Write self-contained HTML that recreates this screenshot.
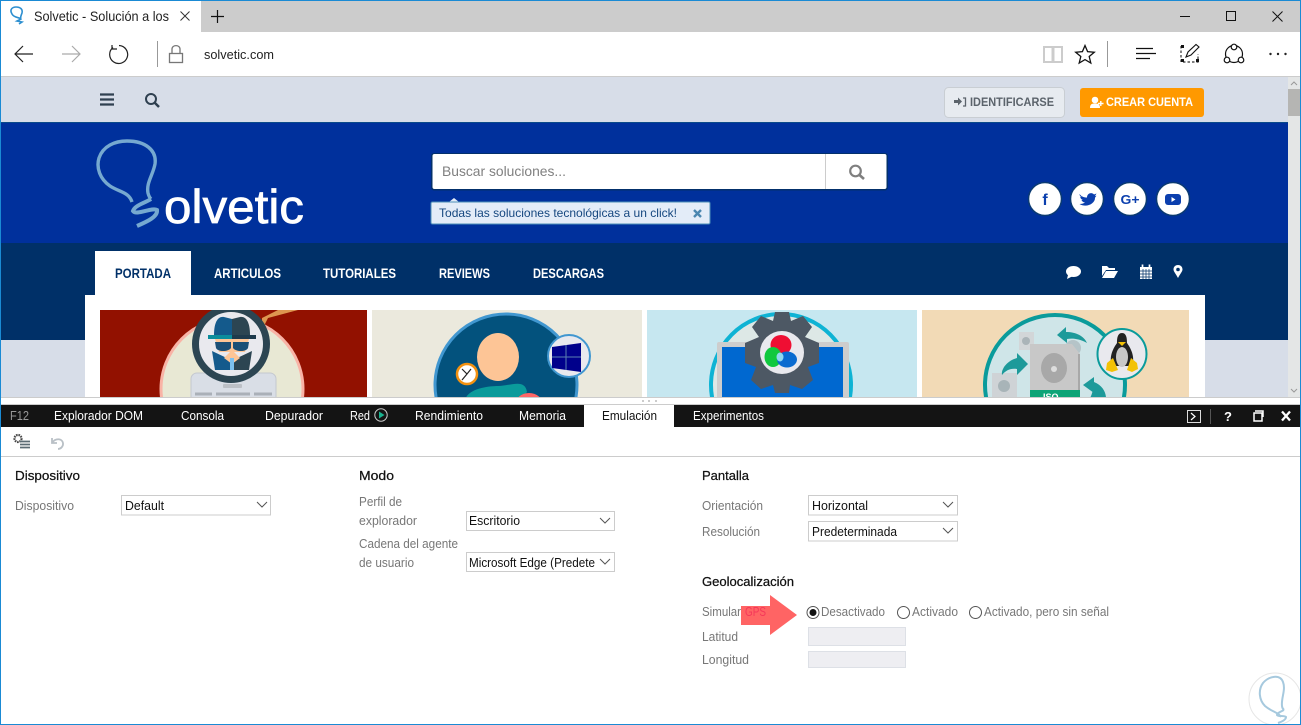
<!DOCTYPE html>
<html lang="es"><head><meta charset="utf-8"><title>Solvetic</title>
<style>html,body{margin:0;padding:0;background:#fff;overflow:hidden}svg{display:block}text{font-family:"Liberation Sans",sans-serif}.d{font-size:12.5px;fill:#fff}.l{font-size:12.5px;fill:#777}.h{font-size:13px;fill:#111;stroke:#111;stroke-width:.25}.v{font-size:12.5px;fill:#111}.n{font-size:14px;font-weight:bold;fill:#fff}</style></head><body>
<svg width="1301" height="725" viewBox="0 0 1301 725" xmlns="http://www.w3.org/2000/svg">
<defs><clipPath id="cl"><rect x="85" y="310" width="1120" height="87"/></clipPath><clipPath id="me"><rect x="468" y="553" width="127" height="18"/></clipPath></defs>
<rect width="1301" height="725" fill="#fff"/>
<!-- tab strip -->
<rect x="0" y="0" width="1301" height="32" fill="#ccc"/>
<rect x="1" y="1" width="200" height="31" fill="#fff"/>
<path d="M21 19C19 17 14 18 12 14C9 9 13 7 16 7C20 7 23 9 22 13C21 16 20 17 21 20M21 19L17 21L22 22L19 24" fill="none" stroke="#2d8fd0" stroke-width="1.600"/>
<text x="34" y="21" font-size="14" fill="#222" textLength="135" lengthAdjust="spacingAndGlyphs">Solvetic - Solución a los</text>
<path d="M180.500 11.500L189.500 20.500M189.500 11.500L180.500 20.500" stroke="#333" stroke-width="1" fill="none"/>
<path d="M217.500 10V23M211 16.500H224" stroke="#111" stroke-width="1.200" fill="none"/>
<path d="M1180 16.500H1190" stroke="#111" stroke-width="1"/>
<rect x="1226.500" y="11.500" width="9" height="9" fill="none" stroke="#111" stroke-width="1"/>
<path d="M1272.500 11.500L1282.500 21.500M1282.500 11.500L1272.500 21.500" stroke="#111" stroke-width="1" fill="none"/>
<!-- address bar -->
<rect x="1" y="32" width="1299" height="44" fill="#fff"/>
<rect x="1" y="76" width="1299" height="1" fill="#ccc"/>
<path d="M33 54H15M23 46L15 54L23 62" fill="none" stroke="#222" stroke-width="1.200"/>
<path d="M62 54H80M72 46L80 54L72 62" fill="none" stroke="#aaa" stroke-width="1.200"/>
<path d="M113 47.500A9 9 0 1 0 119 45.500M112 45V49H117" fill="none" stroke="#222" stroke-width="1.200"/>
<rect x="157" y="41" width="1" height="26" fill="#999"/>
<rect x="169.500" y="53.500" width="13" height="9" fill="none" stroke="#777" stroke-width="1.300"/>
<path d="M172 53V49C172 44.500 180 44.500 180 49V53" fill="none" stroke="#777" stroke-width="1.300"/>
<text x="204" y="59" font-size="13" fill="#222" textLength="70" lengthAdjust="spacingAndGlyphs">solvetic.com</text>
<path d="M1044 47H1052.500V62H1044ZM1053.500 47H1062V62H1053.500Z" fill="none" stroke="#ccc" stroke-width="2"/>
<path d="M1085 45.500L1087.600 51.600L1094.300 52.200L1089.200 56.500L1090.800 63L1085 59.600L1079.200 63L1080.800 56.500L1075.700 52.200L1082.400 51.600Z" fill="none" stroke="#111" stroke-width="1.300"/>
<rect x="1107" y="41" width="1" height="26" fill="#999"/>
<path d="M1136 48.500H1153M1136 53.500H1156M1136 58.500H1150" stroke="#111" stroke-width="1.200"/>
<path d="M1181 46V62H1198V54" fill="none" stroke="#333" stroke-width="1.200" stroke-dasharray="2.500 2"/>
<path d="M1186 57L1188 52L1196 44.500L1199 47L1191 55Z" fill="none" stroke="#111" stroke-width="1.100"/>
<path d="M1181 45h3v3h-3zM1196 59h3v3h-3zM1181 59h3v3h-3z" fill="#111"/>
<circle cx="1234" cy="54" r="8.500" fill="none" stroke="#111" stroke-width="1.200"/>
<circle cx="1234" cy="47" r="2.800" fill="#fff" stroke="#111" stroke-width="1.200"/>
<circle cx="1227" cy="60" r="2.800" fill="#fff" stroke="#111" stroke-width="1.200"/>
<circle cx="1241" cy="60" r="2.800" fill="#fff" stroke="#111" stroke-width="1.200"/>
<circle cx="1270.500" cy="54" r="1.200" fill="#222"/><circle cx="1278" cy="54" r="1.200" fill="#222"/><circle cx="1285.500" cy="54" r="1.200" fill="#222"/>
<!-- site top bar -->
<rect x="1" y="77" width="1287" height="45" fill="#d7dde8"/>
<path d="M100 94.500H114M100 99.500H114M100 104.500H114" stroke="#2f4050" stroke-width="2.300"/>
<circle cx="151" cy="99" r="5" fill="none" stroke="#2f4050" stroke-width="2"/><path d="M154.500 102.500L159 107" stroke="#2f4050" stroke-width="2.500"/>
<rect x="944.500" y="87.500" width="120" height="30" rx="4" fill="#e7ebf0" stroke="#c9ced3"/>
<path d="M954 100.500H958V98L962 102L958 106V103.500H954Z" fill="#5b636b" transform="translate(0,-.5)"/><path d="M963 98H965.500V106H963" fill="none" stroke="#5b636b" stroke-width="1.300"/>
<text x="970" y="106" font-size="11.500" font-weight="bold" fill="#5b636b" textLength="84" lengthAdjust="spacingAndGlyphs">IDENTIFICARSE</text>
<rect x="1080" y="88" width="124" height="29" rx="3" fill="#ff9900"/>
<circle cx="1095" cy="100" r="3.300" fill="#fff"/><path d="M1090 108C1090 104 1092 103.500 1095 103.500C1098 103.500 1100 104 1100 108Z" fill="#fff"/><path d="M1098 103.500H1103.500M1100.800 101V106" stroke="#fff" stroke-width="1.400"/>
<text x="1106" y="106" font-size="11.500" font-weight="bold" fill="#fff" textLength="87" lengthAdjust="spacingAndGlyphs">CREAR CUENTA</text>
<!-- hero -->
<rect x="1" y="122" width="1287" height="121" fill="#00309c"/>
<rect x="1" y="122" width="1287" height="1" fill="#0a4a8a"/>
<path d="M132 202C129 192 119 192 110 186C100 179 96 168 99 158C103 146 115 141 127 141C145 141 157 150 155 164C153 175 146 183 148 193C149 197 150 198 151 199" fill="none" stroke="#76a9d0" stroke-width="3.400"/>
<path d="M151 199C145 203 135 205 133 211C136 216 152 207 157 210C158 217 146 222 137 226" fill="none" stroke="#76a9d0" stroke-width="4"/>
<text x="164" y="223" font-size="47" fill="#fff" stroke="#fff" stroke-width=".7" textLength="140" lengthAdjust="spacingAndGlyphs">olvetic</text>
<rect x="431" y="153" width="457" height="37.500" rx="3" fill="#03306b"/>
<rect x="432.500" y="154" width="454" height="35" rx="2" fill="#fff"/>
<rect x="825" y="154" width="1" height="35" fill="#ccc"/>
<text x="442" y="176" font-size="14" fill="#808080" textLength="124" lengthAdjust="spacingAndGlyphs">Buscar soluciones...</text>
<circle cx="855.500" cy="171" r="5.300" fill="none" stroke="#7f7f7f" stroke-width="2.200"/><path d="M859.500 175L864 179" stroke="#7f7f7f" stroke-width="2.600"/>
<path d="M449 202L454 198L459 202Z" fill="#e3ecf8"/>
<rect x="431" y="202" width="279" height="22" rx="1.500" fill="#e3ecf8" stroke="#4d8fb8"/>
<text x="439" y="217" font-size="12" fill="#15477f" textLength="238" lengthAdjust="spacingAndGlyphs">Todas las soluciones tecnológicas a un click!</text>
<path d="M694 210L701 217M701 210L694 217" stroke="#4a86b0" stroke-width="2.400"/>
<g fill="#fff" stroke="#0a3a72" stroke-width="1.500"><circle cx="1045" cy="199" r="16.500"/><circle cx="1087" cy="199" r="16.500"/><circle cx="1130" cy="199" r="16.500"/><circle cx="1173" cy="199" r="16.500"/></g>
<text x="1045" y="205" font-size="16" font-weight="bold" fill="#0b3fae" text-anchor="middle">f</text>
<path d="M1079.500 194C1082 197 1084 197.500 1087 197.500C1087 193 1092 192 1094 194.500L1096.500 193.500L1095 196L1096.500 195.800C1095.500 197 1095 197.500 1095 198C1095 204 1086 208 1079.500 204C1082 204 1083.500 203.500 1085 202.500C1083 202.300 1082 201.300 1081.500 200L1083 200C1081 199.300 1080.300 198 1080.300 196.500L1082 197C1080 196 1079.500 195.500 1079.500 194Z" fill="#0b3fae"/>
<text x="1120.500" y="204" font-size="13" font-weight="bold" fill="#0b3fae" textLength="19" lengthAdjust="spacingAndGlyphs">G+</text>
<rect x="1165" y="194" width="16" height="11" rx="3" fill="#0b3fae"/><path d="M1171.500 197L1175.500 199.500L1171.500 202Z" fill="#fff"/>
<!-- nav -->
<rect x="1" y="243" width="1287" height="97" fill="#003068"/>
<rect x="1" y="340" width="1287" height="58" fill="#d7dde8"/>
<rect x="95" y="251" width="96" height="44" fill="#fff"/>
<text x="115" y="278" class="n" style="fill:#003068" textLength="56" lengthAdjust="spacingAndGlyphs">PORTADA</text>
<text x="214" y="278" class="n" textLength="67" lengthAdjust="spacingAndGlyphs">ARTICULOS</text>
<text x="323" y="278" class="n" textLength="73" lengthAdjust="spacingAndGlyphs">TUTORIALES</text>
<text x="439" y="278" class="n" textLength="51" lengthAdjust="spacingAndGlyphs">REVIEWS</text>
<text x="533" y="278" class="n" textLength="71" lengthAdjust="spacingAndGlyphs">DESCARGAS</text>
<ellipse cx="1073.500" cy="271.500" rx="7.500" ry="5.500" fill="#fff"/><path d="M1068 275L1067 279L1073 276Z" fill="#fff"/>
<path d="M1102 266H1107L1109 268H1115V270H1106L1102 276ZM1106 271H1118L1114 278H1102Z" fill="#fff"/>
<rect x="1140" y="267" width="12" height="12" fill="#fff"/><path d="M1140 271H1152M1140 274H1152M1140 277H1152M1143 269V279M1146 269V279M1149 269V279" stroke="#003068" stroke-width=".7"/><path d="M1142.500 264.500V268M1149.500 264.500V268" stroke="#fff" stroke-width="1.700"/>
<path d="M1178 278C1176 274 1173.500 271.500 1173.500 269.500C1173.500 263.500 1182.500 263.500 1182.500 269.500C1182.500 271.500 1180 274 1178 278Z" fill="#fff"/><circle cx="1178" cy="269.500" r="1.800" fill="#003068"/>
<!-- content -->
<rect x="85" y="295" width="1120" height="103" fill="#fff"/>
<g clip-path="url(#cl)">
<rect x="100" y="310" width="267" height="90" fill="#921100"/>
<circle cx="232" cy="389" r="71" fill="#e8e8d4" stroke="#f9b3a6" stroke-width="3"/>
<path d="M262 330L268 318L298 310H278L262 318Z" fill="#de9650"/>
<rect x="191" y="373" width="85" height="30" rx="6" fill="#d9dee6" stroke="#c4c8cf"/>
<rect x="223" y="384" width="19" height="4" rx="1" fill="#bcc0c6"/>
<path d="M195 394H212M216 394H250M254 394H272" stroke="#aab0b8" stroke-width="3"/>
<circle cx="231" cy="344" r="35.500" fill="#e9e9ee" stroke="#2c4552" stroke-width="7"/>
<path d="M214 335C214 322 218 316 224 317L232 319V335Z" fill="#145a8c"/><path d="M232 319L240 317C246 316 250 322 250 335H232Z" fill="#2c4552"/>
<rect x="208" y="335" width="24" height="4" fill="#0c8d9c"/><rect x="232" y="335" width="24" height="4" fill="#1e3a4c"/>
<path d="M215 339H249L245 352H219Z" fill="#fdc596"/>
<path d="M215 342H231V348C228 352 218 352 216 348ZM233 342H249L248 348C246 352 236 352 233 348Z" fill="#1a4f76"/>
<path d="M212 351L231 360V370H215Z" fill="#145a8c"/><path d="M252 351L233 360V370H249Z" fill="#2c4552"/>
<path d="M232 350L224 358L232 364L240 358Z" fill="#fdc596"/>
<rect x="230" y="358" width="4" height="12" fill="#7cc0ee"/>
<rect x="372" y="310" width="270" height="90" fill="#ebe9dd"/>
<circle cx="506" cy="385" r="71" fill="#03527d" stroke="#4197d0" stroke-width="3"/>
<path d="M465 400C468 388 490 386 498 386C510 386 525 378 527 392L520 400Z" fill="#0a9b9b"/>
<ellipse cx="498" cy="357" rx="21" ry="24" fill="#fdc596"/>
<ellipse cx="529" cy="405" rx="14" ry="12" fill="#f66"/>
<circle cx="467" cy="374" r="10" fill="#fff" stroke="#f29111" stroke-width="2.500"/>
<path d="M462 369L467 374L471 369M467 374L462 380" fill="none" stroke="#222" stroke-width="1.200"/>
<circle cx="569" cy="356" r="21" fill="#e9e9ee" stroke="#4197d0" stroke-width="2"/>
<path d="M552 347L581 343V372L552 368Z" fill="#00008b"/><path d="M566 345V370M552 357H581" stroke="#5a7fb0" stroke-width="1"/>
<rect x="647" y="310" width="270" height="90" fill="#c6e7f0"/>
<ellipse cx="781" cy="385" rx="70" ry="71" fill="#dde8e6" stroke="#0eb3d4" stroke-width="4"/>
<rect x="717" y="342" width="132" height="60" rx="2" fill="#cdcdcd"/>
<rect x="722" y="347" width="121" height="53" fill="#0068d0"/>
<path d="M775 312H789L791 321L803 316L812 327L805 337L819 343V363L808 367L813 380L802 389L790 385L789 393H775L773 385L761 389L751 380L756 367L745 363V343L759 337L752 327L761 316L773 321Z" fill="#4d5864"/>
<ellipse cx="782" cy="352.500" rx="22" ry="21.500" fill="#e9e9ee"/>
<ellipse cx="781" cy="345" rx="10.500" ry="10" fill="#ef0e33"/>
<ellipse cx="773" cy="357" rx="8.500" ry="10" fill="#10c83e"/>
<ellipse cx="787" cy="359.500" rx="10" ry="8" fill="#0a6bd0"/>
<ellipse cx="780" cy="357" rx="3.500" ry="4.500" fill="#8fd8ef"/>
<rect x="922" y="310" width="267" height="90" fill="#f2dab6"/>
<circle cx="1055" cy="385" r="70" fill="#cfe5e8" stroke="#0a9b9b" stroke-width="4"/>
<rect x="1019" y="332" width="15" height="18" fill="#d2d6d8"/><circle cx="1026" cy="341" r="4" fill="#aab4b8"/>
<circle cx="1073" cy="348" r="8" fill="#b5c4c8"/>
<path d="M1030 344H1072L1080 354V398H1030Z" fill="#c8c8c8"/>
<rect x="1078" y="354" width="2" height="40" fill="#a8a8a8"/>
<ellipse cx="1054" cy="368" rx="13" ry="15" fill="#a8a8a8"/><circle cx="1054" cy="369" r="3" fill="#ddd"/>
<rect x="1030" y="390" width="50" height="10" fill="#0da477"/>
<text x="1043" y="400" font-size="9" font-weight="bold" fill="#fff">ISO</text>
<rect x="992" y="373" width="25" height="27" fill="#cfd3d6"/><circle cx="1004" cy="386" r="6" fill="#a8b4b8"/>
<path d="M1057 335L1066 327L1066 332C1076 332 1084 336 1087 343C1080 339 1073 338 1067 339L1067 343Z" fill="#1d9a9a"/>
<path d="M1028 364L1017 353V358C1006 361 1001 370 1002 375C1006 370 1011 368 1017 369V375Z" fill="#1d9a9a"/>
<path d="M1083 385L1094 377V382C1102 385 1106 392 1106 398H1090C1093 393 1092 390 1094 389V393Z" fill="#1d9a9a"/>
<ellipse cx="1122" cy="354" rx="24.500" ry="25" fill="#e9e9ee" stroke="#0a9b9b" stroke-width="2"/>
<path d="M1122 333C1127 333 1127 340 1127 343C1132 350 1135 358 1132 366H1112C1109 358 1112 350 1117 343C1117 340 1117 333 1122 333Z" fill="#222"/>
<ellipse cx="1122" cy="357" rx="6" ry="10" fill="#c8c8c8"/>
<path d="M1118 342H1126L1122 346Z" fill="#f3c206"/>
<path d="M1107 363L1113 358L1118 370L1112 372L1106 370ZM1137 363L1131 358L1127 370L1132 372L1138 369Z" fill="#f3c206"/>
</g>
<!-- scrollbar -->
<rect x="1288" y="77" width="12" height="321" fill="#e4e6e6"/>
<rect x="1288" y="89" width="12" height="27" fill="#b5b5b3"/>
<path d="M1291 85L1294 82L1297 85" fill="none" stroke="#999"/><path d="M1291 389L1294 392L1297 389" fill="none" stroke="#999"/>
<!-- devtools -->
<rect x="1" y="397" width="1299" height="1" fill="#ccc"/>
<rect x="1" y="398" width="1299" height="6" fill="#fff"/>
<rect x="1" y="404" width="1299" height="1" fill="#ccc"/>
<path d="M642 400h2v2h-2zM648 400h2v2h-2zM655 400h2v2h-2z" fill="#ccc"/>
<rect x="1" y="405" width="1299" height="22" fill="#141414"/>
<rect x="584" y="405" width="90" height="22" fill="#fff"/>
<text x="10" y="420" class="d" style="fill:#999" textLength="19" lengthAdjust="spacingAndGlyphs">F12</text>
<text x="54" y="420" class="d" textLength="89" lengthAdjust="spacingAndGlyphs">Explorador DOM</text>
<text x="181" y="420" class="d" textLength="43" lengthAdjust="spacingAndGlyphs">Consola</text>
<text x="265" y="420" class="d" textLength="58" lengthAdjust="spacingAndGlyphs">Depurador</text>
<text x="350" y="420" class="d" textLength="20" lengthAdjust="spacingAndGlyphs">Red</text>
<circle cx="381" cy="415" r="6.200" fill="none" stroke="#ccc" stroke-width="1"/><path d="M379 411.500L384.500 415L379 418.500Z" fill="#19b28f"/>
<text x="415" y="420" class="d" textLength="68" lengthAdjust="spacingAndGlyphs">Rendimiento</text>
<text x="519" y="420" class="d" textLength="47" lengthAdjust="spacingAndGlyphs">Memoria</text>
<text x="602" y="420" class="d" style="fill:#111" textLength="55" lengthAdjust="spacingAndGlyphs">Emulación</text>
<text x="693" y="420" class="d" textLength="71" lengthAdjust="spacingAndGlyphs">Experimentos</text>
<rect x="1187.500" y="410.500" width="13" height="12" fill="none" stroke="#ddd"/>
<path d="M1191 413L1195 416.500L1191 420" fill="none" stroke="#fff" stroke-width="1.200"/>
<rect x="1210" y="409" width="1" height="15" fill="#555"/>
<text x="1228" y="421" font-size="13" font-weight="bold" fill="#fff" text-anchor="middle">?</text>
<rect x="1254" y="413" width="8" height="8" fill="none" stroke="#fff" stroke-width="1.500"/><path d="M1255 411H1263V417" fill="none" stroke="#fff" stroke-width="1.500"/>
<path d="M1282 411.500L1290 420.500M1290 411.500L1282 420.500" stroke="#fff" stroke-width="2.300"/>
<!-- toolbar -->
<circle cx="18" cy="438.500" r="3.500" fill="none" stroke="#444" stroke-width="2.200" stroke-dasharray="1.600 .8"/>
<path d="M20 441.500H30M20 444.500H30M20 447.500H30" stroke="#5c6b74" stroke-width="1.700"/>
<path d="M52 438V443H57M52 443C55 438 62 438 63 443C63.500 446 61 449 58 449" fill="none" stroke="#b9c0c6" stroke-width="1.800"/>
<rect x="1" y="456" width="1299" height="1" fill="#ccc"/>
<!-- panels -->
<text x="15" y="480" class="h" textLength="65" lengthAdjust="spacingAndGlyphs">Dispositivo</text>
<text x="359" y="480" class="h" textLength="35" lengthAdjust="spacingAndGlyphs">Modo</text>
<text x="702" y="480" class="h" textLength="47" lengthAdjust="spacingAndGlyphs">Pantalla</text>
<text x="702" y="586" class="h" textLength="92" lengthAdjust="spacingAndGlyphs">Geolocalización</text>
<text x="15" y="510" class="l" textLength="59" lengthAdjust="spacingAndGlyphs">Dispositivo</text>
<text x="359" y="506" class="l" textLength="43" lengthAdjust="spacingAndGlyphs">Perfil de</text>
<text x="359" y="525" class="l" textLength="58" lengthAdjust="spacingAndGlyphs">explorador</text>
<text x="359" y="548" class="l" textLength="99" lengthAdjust="spacingAndGlyphs">Cadena del agente</text>
<text x="359" y="567" class="l" textLength="55" lengthAdjust="spacingAndGlyphs">de usuario</text>
<text x="702" y="510" class="l" textLength="61" lengthAdjust="spacingAndGlyphs">Orientación</text>
<text x="702" y="536" class="l" textLength="58" lengthAdjust="spacingAndGlyphs">Resolución</text>
<text x="702" y="616" class="l" textLength="39" lengthAdjust="spacingAndGlyphs">Simular</text>
<text x="702" y="641" class="l" textLength="36" lengthAdjust="spacingAndGlyphs">Latitud</text>
<text x="702" y="664" class="l" textLength="47" lengthAdjust="spacingAndGlyphs">Longitud</text>
<g fill="#fff" stroke="#ccc"><rect x="121.500" y="495.500" width="149" height="19.500"/><rect x="466.500" y="511.500" width="148" height="19"/><rect x="466.500" y="552.500" width="148" height="19"/><rect x="808.500" y="495.500" width="149" height="19.500"/><rect x="808.500" y="521.500" width="149" height="19.500"/></g>
<text x="125" y="510" class="v" textLength="39" lengthAdjust="spacingAndGlyphs">Default</text>
<text x="469" y="525" class="v" textLength="51" lengthAdjust="spacingAndGlyphs">Escritorio</text>
<g clip-path="url(#me)"><text x="469" y="567" class="v" textLength="126" lengthAdjust="spacingAndGlyphs">Microsoft Edge (Predete</text></g>
<text x="812" y="510" class="v" textLength="56" lengthAdjust="spacingAndGlyphs">Horizontal</text>
<text x="812" y="536" class="v" textLength="85" lengthAdjust="spacingAndGlyphs">Predeterminada</text>
<path d="M257 502L262 507L267 502M600 518L605 523L610 518M600 559L605 564L610 559M943 502L948 507L953 502M943 528L948 533L953 528" fill="none" stroke="#555" stroke-width="1"/>
<circle cx="813" cy="612.500" r="6" fill="#fff" stroke="#555"/><circle cx="813" cy="612.500" r="3.500" fill="#111"/>
<circle cx="903.500" cy="612.500" r="6" fill="#fff" stroke="#555"/>
<circle cx="975.500" cy="612.500" r="6" fill="#fff" stroke="#555"/>
<text x="821" y="616" class="l" textLength="64" lengthAdjust="spacingAndGlyphs">Desactivado</text>
<text x="912" y="616" class="l" textLength="46" lengthAdjust="spacingAndGlyphs">Activado</text>
<text x="984" y="616" class="l" textLength="125" lengthAdjust="spacingAndGlyphs">Activado, pero sin señal</text>
<rect x="808.500" y="627.500" width="97" height="18" fill="#eeeef2" stroke="#dde0e6"/>
<rect x="808.500" y="651.500" width="97" height="16" fill="#eeeef2" stroke="#dde0e6"/>
<path d="M741 606H770V595L797 615L770 635V625H741Z" fill="#ff6464"/>
<text x="745" y="616" font-size="12.500" fill="#f5385a" textLength="21" lengthAdjust="spacingAndGlyphs">GPS</text>
<!-- watermark -->
<circle cx="1275" cy="699" r="26" fill="#fff" stroke="#e6e6e6"/>
<path d="M1281 717C1278 712 1272 712 1265 706C1259 700 1258 690 1263 683C1269 676 1280 674 1283 682C1286 690 1281 698 1282 706C1282 708 1283 709 1284 710M1284 710C1280 712 1277 713 1277 715C1278 717 1284 715 1286 717C1286 720 1281 722 1278 723" fill="none" stroke="#a6c9de" stroke-width="2"/>
<!-- window border -->
<rect x=".5" y=".5" width="1300" height="724" fill="none" stroke="#1a8ad4" stroke-width="1"/>
</svg>
</body></html>
